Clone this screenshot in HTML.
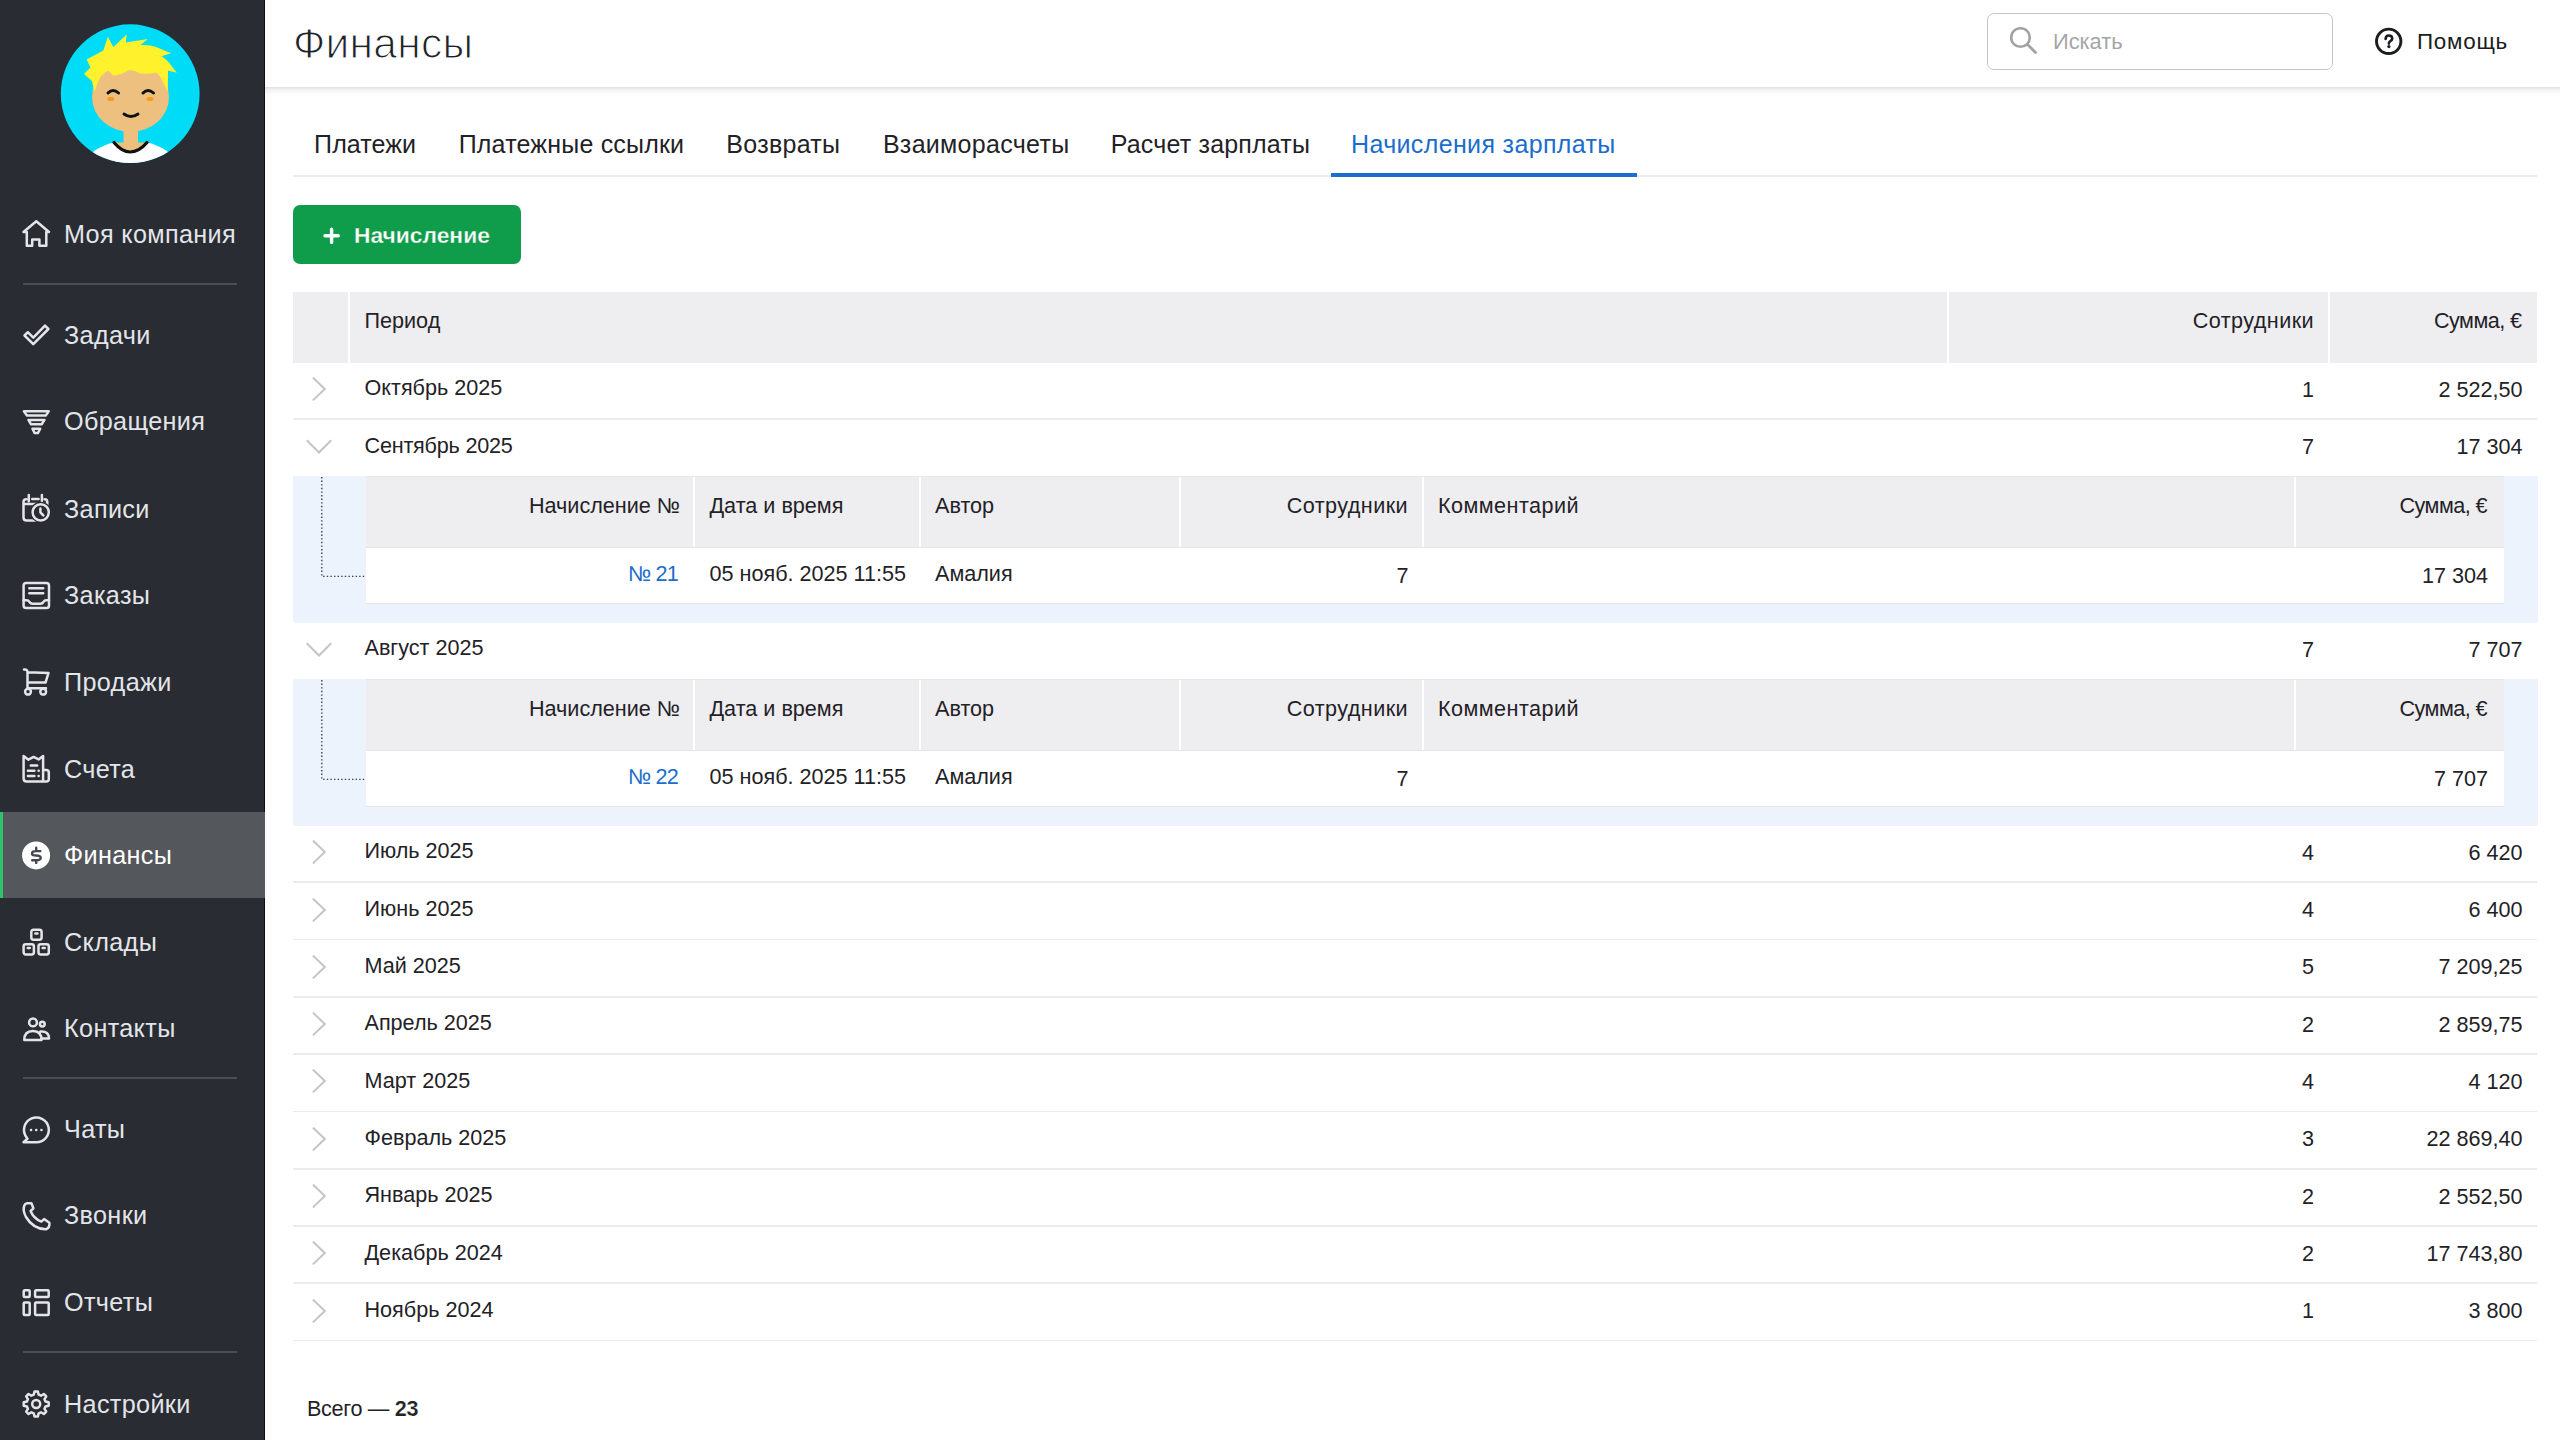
<!DOCTYPE html>
<html lang="ru"><head><meta charset="utf-8"><title>Финансы</title>
<style>
html,body{margin:0;padding:0;}
body{width:2560px;height:1440px;overflow:hidden;position:relative;background:#ffffff;font-family:"Liberation Sans", sans-serif;}
.t{position:absolute;line-height:1;white-space:nowrap;}
.r{position:absolute;display:block;}
</style></head><body>

<div class="r" style="left:0.00px;top:0.00px;width:265.00px;height:1440.00px;background:#292c33;"></div>
<div class="r" style="left:264.00px;top:0.00px;width:1.00px;height:1440.00px;background:#0d0f11;"></div>
<svg class="r" style="left:50.00px;top:15.00px;" width="160" height="160" viewBox="0 0 160 160">
<defs><clipPath id="avc"><circle cx="80.2" cy="78.7" r="69.4"/></clipPath></defs>
<circle cx="80.2" cy="78.7" r="69.4" fill="#00dbf8"/>
<g clip-path="url(#avc)">
<rect x="73.5" y="100" width="14.5" height="35" fill="#edc07f"/>
<path d="M30 160 L44 136 Q55 129 64 127.5 Q72 136 80 136.5 Q89 136 97 127.5 Q106 129 117 136 L132 160 Z" fill="#ffffff"/>
<path d="M64 127.5 Q72 137 80 137 Q89 137 97 127.5 Z" fill="#edc07f"/><path d="M64 127.5 Q72 137 80 137 Q89 137 97 127.5" fill="none" stroke="#111" stroke-width="3.2" stroke-linecap="round"/>
<ellipse cx="80.5" cy="82" rx="38.5" ry="35" fill="#edc07f"/>
<path d="M44.4 76.7 L42 66 L33.9 58.9 L40.5 52.5 L36.7 44.4 L47.8 38.5 L53.3 35.6 L57.8 21.7 L63.3 32 L76.7 19.4 L75.8 27.5 L97.8 23.9 L90.5 30 Q100 29.5 106.7 32.2 L121.1 38.3 L111.5 41.3 Q116 44 118.5 47 L126.7 57.8 L118 55.6 L117.8 76.7 L112.5 66 Q110 60 106 57.5 Q98 59.5 90 58.5 Q84 54.5 78 55.5 Q70 60.5 63 60.5 Q60 57 58 55.5 Q52 59 49 64.5 Z" fill="#fff22c"/>
<path d="M58 78 Q63 73 68.5 78 M93 78 Q98 73 103.5 78" fill="none" stroke="#111" stroke-width="3" stroke-linecap="round"/>
<ellipse cx="60.8" cy="84" rx="3.6" ry="2.1" fill="#f59a1c"/>
<ellipse cx="100" cy="84" rx="3.6" ry="2.1" fill="#f59a1c"/>
<path d="M74 99 Q81 104 88 99" fill="none" stroke="#111" stroke-width="3" stroke-linecap="round"/>
</g></svg>
<div class="r" style="left:0.00px;top:812.20px;width:265.00px;height:86.00px;background:#54575c;"></div>
<div class="r" style="left:0.00px;top:812.20px;width:3.00px;height:86.00px;background:#2fc36e;"></div>
<span class="t" style="left:64.00px;top:221.67px;font-size:25.2px;color:#e3e5e9;font-weight:400;letter-spacing:0.350px;">Моя компания</span>
<svg class="r" style="left:22.00px;top:220.00px;overflow:visible" width="29" height="29" viewBox="0 0 29 29"><path d="M4.8 12 H1.5 L14.3 1.3 L27 12 H24.3 V25.8 H17.4 V19.6 H10.2 V25.8 H4.8 Z" fill="none" stroke="#e3e5e9" stroke-width="2.5" stroke-linecap="round" stroke-linejoin="round"/></svg>
<span class="t" style="left:64.00px;top:323.47px;font-size:25.2px;color:#e3e5e9;font-weight:400;letter-spacing:0.350px;">Задачи</span>
<svg class="r" style="left:22.00px;top:320.00px;overflow:visible" width="29" height="29" viewBox="0 0 29 29"><path d="M2.5 15.5 L5.8 12.2 L11.3 17.6 L23 5.6 L26.4 9 L11.3 24.2 Z" fill="none" stroke="#e3e5e9" stroke-width="2.5" stroke-linecap="round" stroke-linejoin="round"/></svg>
<span class="t" style="left:64.00px;top:409.37px;font-size:25.2px;color:#e3e5e9;font-weight:400;letter-spacing:0.350px;">Обращения</span>
<svg class="r" style="left:22.00px;top:406.50px;overflow:visible" width="29" height="29" viewBox="0 0 29 29"><path d="M1.9 4.2 H26.7 L23.7 8.6 H5 Z M6.5 12.9 H22.5 L19.7 17.2 H8.9 Z M10.5 21.7 H18.2 L15.9 26.1 H12.7 Z" fill="none" stroke="#e3e5e9" stroke-width="2.5" stroke-linecap="round" stroke-linejoin="round"/></svg>
<span class="t" style="left:64.00px;top:496.67px;font-size:25.2px;color:#e3e5e9;font-weight:400;letter-spacing:0.350px;">Записи</span>
<svg class="r" style="left:22.00px;top:494.00px;overflow:visible" width="29" height="29" viewBox="0 0 29 29"><path d="M19 26.5 H4.5 Q1.5 26.5 1.5 23.5 V8 Q1.5 5.3 4.3 5.3 M22.6 5.3 Q25.3 5.3 25.3 8 V13 M1.5 10.1 H25.3 M6.8 0.9 V7.2 M19.9 0.9 V7.2 M10.2 5.1 H16.6" fill="none" stroke="#e3e5e9" stroke-width="2.5" stroke-linecap="round" stroke-linejoin="round"/><circle cx="18.7" cy="18.3" r="10.6" fill="#292c33"/><circle cx="18.7" cy="18.3" r="8.1" fill="none" stroke="#e3e5e9" stroke-width="2.5" stroke-linecap="round" stroke-linejoin="round"/><path d="M18.4 14.6 V18.3 L21.3 21.4" fill="none" stroke="#e3e5e9" stroke-width="2.5" stroke-linecap="round" stroke-linejoin="round"/></svg>
<span class="t" style="left:64.00px;top:582.87px;font-size:25.2px;color:#e3e5e9;font-weight:400;letter-spacing:0.350px;">Заказы</span>
<svg class="r" style="left:22.00px;top:580.50px;overflow:visible" width="29" height="29" viewBox="0 0 29 29"><rect x="1.6" y="1.9" width="25.4" height="25.1" rx="2.6" fill="none" stroke="#e3e5e9" stroke-width="2.5" stroke-linecap="round" stroke-linejoin="round"/><path d="M7.3 7.3 H21.2 M7.3 12.3 H21.2 M1.6 19.2 H4.7 Q6.5 19.2 7.5 21 Q8.5 22.7 10.3 22.7 H18.6 Q20.4 22.7 21.4 21 Q22.4 19.2 24.2 19.2 H27" fill="none" stroke="#e3e5e9" stroke-width="2.5" stroke-linecap="round" stroke-linejoin="round"/></svg>
<span class="t" style="left:64.00px;top:669.67px;font-size:25.2px;color:#e3e5e9;font-weight:400;letter-spacing:0.350px;">Продажи</span>
<svg class="r" style="left:22.00px;top:668.00px;overflow:visible" width="29" height="29" viewBox="0 0 29 29"><path d="M2 1.5 Q5.5 1 5.5 4.5 V20.2 H24 M5.5 4.2 L26.5 5 L23.5 14.6 H5.5" fill="none" stroke="#e3e5e9" stroke-width="2.5" stroke-linecap="round" stroke-linejoin="round"/><circle cx="6" cy="23.7" r="2.9" fill="none" stroke="#e3e5e9" stroke-width="2.5" stroke-linecap="round" stroke-linejoin="round"/><circle cx="21.2" cy="23.7" r="2.9" fill="none" stroke="#e3e5e9" stroke-width="2.5" stroke-linecap="round" stroke-linejoin="round"/></svg>
<span class="t" style="left:64.00px;top:757.07px;font-size:25.2px;color:#e3e5e9;font-weight:400;letter-spacing:0.350px;">Счета</span>
<svg class="r" style="left:22.00px;top:754.50px;overflow:visible" width="29" height="29" viewBox="0 0 29 29"><path d="M21.1 14.9 H24.3 Q26.8 14.9 26.8 17.4 V24.1 Q26.8 26.6 24.3 26.6 H4.6 Q1.6 26.6 1.6 23.6 V1.1 L6.4 4.7 L11.6 1.9 L16.6 4.4 L21.1 1.1 V26.6 M8.8 10.6 H15.2 M5.9 15.8 H12.4 M5.9 20.9 H12.4 M16.6 15.8 H16.7 M16.6 20.9 H16.7" fill="none" stroke="#e3e5e9" stroke-width="2.5" stroke-linecap="round" stroke-linejoin="round"/></svg>
<span class="t" style="left:64.00px;top:843.07px;font-size:25.2px;color:#ffffff;font-weight:400;letter-spacing:0.350px;">Финансы</span>
<svg class="r" style="left:22.00px;top:840.50px;overflow:visible" width="29" height="29" viewBox="0 0 29 29"><circle cx="14.1" cy="14.45" r="14" fill="#ffffff"/><path d="M18.4 10.1 H14.2 Q10 10.1 10 12.4 Q10 14.5 14 14.5 Q18.7 14.5 18.7 17 Q18.7 19.2 14.2 19.2 H10.2 M14.2 6.8 V10.1 M14.2 19.2 V21.9" fill="none" stroke="#44474c" stroke-width="2.4" stroke-linecap="round" stroke-linejoin="round"/></svg>
<span class="t" style="left:64.00px;top:930.27px;font-size:25.2px;color:#e3e5e9;font-weight:400;letter-spacing:0.350px;">Склады</span>
<svg class="r" style="left:22.00px;top:928.00px;overflow:visible" width="29" height="29" viewBox="0 0 29 29"><rect x="9.3" y="1.7" width="10.3" height="10" rx="2.2" fill="none" stroke="#e3e5e9" stroke-width="2.5" stroke-linecap="round" stroke-linejoin="round"/><rect x="1.6" y="16.2" width="10.3" height="10.3" rx="2.2" fill="none" stroke="#e3e5e9" stroke-width="2.5" stroke-linecap="round" stroke-linejoin="round"/><rect x="16.5" y="16.2" width="10.3" height="10.3" rx="2.2" fill="none" stroke="#e3e5e9" stroke-width="2.5" stroke-linecap="round" stroke-linejoin="round"/><path d="M13.4 5.6 H15.5 M5.7 20.1 H7.8 M20.6 20.1 H22.7" fill="none" stroke="#e3e5e9" stroke-width="2.5" stroke-linecap="round" stroke-linejoin="round"/></svg>
<span class="t" style="left:64.00px;top:1016.47px;font-size:25.2px;color:#e3e5e9;font-weight:400;letter-spacing:0.350px;">Контакты</span>
<svg class="r" style="left:22.00px;top:1016.50px;overflow:visible" width="29" height="29" viewBox="0 0 29 29"><circle cx="11" cy="5.4" r="3.9" fill="none" stroke="#e3e5e9" stroke-width="2.5" stroke-linecap="round" stroke-linejoin="round"/><circle cx="20.3" cy="7.1" r="2.4" fill="none" stroke="#e3e5e9" stroke-width="2.5" stroke-linecap="round" stroke-linejoin="round"/><path d="M2.3 23 Q2.3 14 10.9 14 Q19.5 14 19.5 23 Z M18.3 14.6 Q27 13.8 27 21.5 H20.5" fill="none" stroke="#e3e5e9" stroke-width="2.5" stroke-linecap="round" stroke-linejoin="round"/></svg>
<span class="t" style="left:64.00px;top:1116.67px;font-size:25.2px;color:#e3e5e9;font-weight:400;letter-spacing:0.350px;">Чаты</span>
<svg class="r" style="left:22.00px;top:1115.50px;overflow:visible" width="29" height="29" viewBox="0 0 29 29"><path d="M14.2 26.3 A12.4 12.4 0 1 0 4.7 21.6 L5.5 22.8 L1.5 26.3 Z" fill="none" stroke="#e3e5e9" stroke-width="2.5" stroke-linecap="round" stroke-linejoin="round"/><path d="M9 14 H9.1 M14.2 14 H14.3 M19.4 14 H19.5" fill="none" stroke="#e3e5e9" stroke-width="2.5" stroke-linecap="round" stroke-linejoin="round" stroke-width="2.7"/></svg>
<span class="t" style="left:64.00px;top:1203.37px;font-size:25.2px;color:#e3e5e9;font-weight:400;letter-spacing:0.350px;">Звонки</span>
<svg class="r" style="left:22.00px;top:1202.00px;overflow:visible" width="29" height="29" viewBox="0 0 29 29"><path d="M5 1.3 H9.4 L11.4 6.3 L8.6 9 Q11.5 16.5 19.3 19.6 L22.1 17.1 L27.4 20.8 Q28 25.5 24 27.3 Q11 27 4 15 Q0.5 8.5 2.2 3.8 Q3 1.5 5 1.3 Z" fill="none" stroke="#e3e5e9" stroke-width="2.5" stroke-linecap="round" stroke-linejoin="round"/></svg>
<span class="t" style="left:64.00px;top:1290.07px;font-size:25.2px;color:#e3e5e9;font-weight:400;letter-spacing:0.350px;">Отчеты</span>
<svg class="r" style="left:22.00px;top:1289.00px;overflow:visible" width="29" height="29" viewBox="0 0 29 29"><rect x="1.7" y="1.3" width="6" height="6.6" rx="1" fill="none" stroke="#e3e5e9" stroke-width="2.5" stroke-linecap="round" stroke-linejoin="round"/><rect x="13.1" y="1.3" width="13.6" height="6.6" rx="1" fill="none" stroke="#e3e5e9" stroke-width="2.5" stroke-linecap="round" stroke-linejoin="round"/><rect x="1.7" y="13.5" width="6" height="12.6" rx="1" fill="none" stroke="#e3e5e9" stroke-width="2.5" stroke-linecap="round" stroke-linejoin="round"/><rect x="13.1" y="13.5" width="13.6" height="12.6" rx="1" fill="none" stroke="#e3e5e9" stroke-width="2.5" stroke-linecap="round" stroke-linejoin="round"/></svg>
<span class="t" style="left:64.00px;top:1391.67px;font-size:25.2px;color:#e3e5e9;font-weight:400;letter-spacing:0.350px;">Настройки</span>
<svg class="r" style="left:22.00px;top:1390.00px;overflow:visible" width="29" height="29" viewBox="0 0 29 29"><path d="M12.52 1.51 L15.88 1.51 L16.66 4.72 L19.02 5.70 L21.84 3.98 L24.22 6.36 L22.50 9.18 L23.48 11.54 L26.69 12.32 L26.69 15.68 L23.48 16.46 L22.50 18.82 L24.22 21.64 L21.84 24.02 L19.02 22.30 L16.66 23.28 L15.88 26.49 L12.52 26.49 L11.74 23.28 L9.38 22.30 L6.56 24.02 L4.18 21.64 L5.90 18.82 L4.92 16.46 L1.71 15.68 L1.71 12.32 L4.92 11.54 L5.90 9.18 L4.18 6.36 L6.56 3.98 L9.38 5.70 L11.74 4.72 Z" fill="none" stroke="#e3e5e9" stroke-width="2.5" stroke-linecap="round" stroke-linejoin="round"/><circle cx="14.2" cy="14" r="4" fill="none" stroke="#e3e5e9" stroke-width="2.5" stroke-linecap="round" stroke-linejoin="round"/></svg>
<div class="r" style="left:23.00px;top:283.00px;width:214.00px;height:2.00px;background:#4b4f55;"></div>
<div class="r" style="left:23.00px;top:1076.80px;width:214.00px;height:2.00px;background:#4b4f55;"></div>
<div class="r" style="left:23.00px;top:1351.30px;width:214.00px;height:2.00px;background:#4b4f55;"></div>
<div class="r" style="left:265.00px;top:0.00px;width:2295.00px;height:87.00px;background:#ffffff;"></div>
<div class="r" style="left:265px;top:0;width:8px;height:1440px;background:linear-gradient(to right,rgba(0,0,0,0.02),rgba(0,0,0,0));z-index:5"></div>
<div class="r" style="left:265px;top:87px;width:2295px;height:10px;background:linear-gradient(#e3e3e7,#f3f3f5 30%,#fbfbfc 60%,rgba(255,255,255,0));"></div>
<span class="t" style="left:293.00px;top:22.62px;font-size:42.5px;color:#1e2226;font-weight:400;letter-spacing:0.250px;-webkit-text-stroke:1.15px #ffffff;">Финансы</span>
<div class="r" style="left:1987px;top:12.5px;width:345.5px;height:57.5px;box-sizing:border-box;border:1.6px solid #c6c6c8;border-radius:7px;background:#fff;"></div>
<svg class="r" style="left:2006.00px;top:24.00px;" width="34" height="34" viewBox="0 0 34 34"><circle cx="14.5" cy="13.5" r="9.3" fill="none" stroke="#a2a2a4" stroke-width="2.6"/><path d="M21.3 20.3 L29.5 28.5" stroke="#a2a2a4" stroke-width="2.8" stroke-linecap="round"/></svg>
<span class="t" style="left:2053.00px;top:31.05px;font-size:21.8px;color:#a5a5a7;font-weight:400;">Искать</span>
<svg class="r" style="left:2373.00px;top:26.00px;" width="32" height="32" viewBox="0 0 32 32"><circle cx="15.7" cy="15.3" r="12.2" fill="none" stroke="#1b1d20" stroke-width="2.9"/><path d="M12.6 12.9 Q12.6 9.5 15.9 9.5 Q19.2 9.5 19.2 12.5 Q19.2 14.2 17.3 15.2 Q15.9 16 15.9 17.6" fill="none" stroke="#1b1d20" stroke-width="2.6" stroke-linecap="round"/><circle cx="15.9" cy="20.6" r="1.6" fill="#1b1d20"/></svg>
<span class="t" style="left:2417.00px;top:31.44px;font-size:22.4px;color:#1b1d20;font-weight:400;letter-spacing:0.750px;">Помощь</span>
<div class="r" style="left:293.00px;top:174.50px;width:2244.00px;height:2.00px;background:#ececf0;"></div>
<span class="t" style="left:314.10px;top:132.24px;font-size:25.0px;color:#1f2226;font-weight:400;letter-spacing:0.100px;">Платежи</span>
<span class="t" style="left:458.70px;top:132.24px;font-size:25.0px;color:#1f2226;font-weight:400;letter-spacing:0.190px;">Платежные ссылки</span>
<span class="t" style="left:726.30px;top:132.24px;font-size:25.0px;color:#1f2226;font-weight:400;letter-spacing:0.290px;">Возвраты</span>
<span class="t" style="left:882.90px;top:132.24px;font-size:25.0px;color:#1f2226;font-weight:400;letter-spacing:0.300px;">Взаиморасчеты</span>
<span class="t" style="left:1110.70px;top:132.24px;font-size:25.0px;color:#1f2226;font-weight:400;letter-spacing:0.190px;">Расчет зарплаты</span>
<span class="t" style="left:1351.00px;top:132.24px;font-size:25.0px;color:#1a6dcc;font-weight:400;letter-spacing:0.360px;">Начисления зарплаты</span>
<div class="r" style="left:1330.70px;top:173.00px;width:306.30px;height:4.00px;background:#1a6dcc;"></div>
<div class="r" style="left:293px;top:204.7px;width:228px;height:59px;border-radius:7px;background:#0f9d4b;"></div>
<svg class="r" style="left:321.50px;top:225.50px;" width="20" height="20" viewBox="0 0 20 20"><path d="M9.6 3.2 V16.4 M3 9.8 H16.2" stroke="#fff" stroke-width="3.4" stroke-linecap="round"/></svg>
<span class="t" style="left:354.00px;top:224.10px;font-size:22.8px;color:#ffffff;font-weight:700;-webkit-text-stroke:0.3px #0f9d4b;">Начисление</span>
<div class="r" style="left:293.00px;top:291.70px;width:2244.00px;height:70.90px;background:#eeedf0;"></div>
<div class="r" style="left:348.00px;top:291.70px;width:2.00px;height:70.90px;background:#ffffff;"></div>
<div class="r" style="left:1946.50px;top:291.70px;width:2.00px;height:70.90px;background:#ffffff;"></div>
<div class="r" style="left:2328.00px;top:291.70px;width:2.00px;height:70.90px;background:#ffffff;"></div>
<span class="t" style="left:364.50px;top:310.32px;font-size:21.6px;color:#1f2226;font-weight:400;">Период</span>
<span class="t" style="right:246.00px;top:310.32px;font-size:21.6px;color:#1f2226;font-weight:400;letter-spacing:0.420px;">Сотрудники</span>
<span class="t" style="right:38.50px;top:310.32px;font-size:21.6px;color:#1f2226;font-weight:400;letter-spacing:-0.550px;">Сумма, €</span>
<svg class="r" style="left:306.00px;top:374.10px;" width="26" height="30" viewBox="0 0 26 30"><path d="M7.6 4.3 L18.8 15 L7.6 25.7" fill="none" stroke="#c4c4c6" stroke-width="2.0" stroke-linecap="square"/></svg>
<span class="t" style="left:364.50px;top:377.32px;font-size:21.6px;color:#1f2226;font-weight:400;">Октябрь 2025</span>
<span class="t" style="right:246.00px;top:378.62px;font-size:21.6px;color:#1f2226;font-weight:400;">1</span>
<span class="t" style="right:37.50px;top:378.62px;font-size:21.6px;color:#1f2226;font-weight:400;">2 522,50</span>
<div class="r" style="left:293.00px;top:418.20px;width:2244.00px;height:1.80px;background:#ebebee;"></div>
<svg class="r" style="left:304.00px;top:434.30px;" width="30" height="26" viewBox="0 0 30 26"><path d="M3.5 7 L15 18.5 L26.5 7" fill="none" stroke="#c4c4c6" stroke-width="2.0" stroke-linecap="square"/></svg>
<span class="t" style="left:364.50px;top:434.52px;font-size:21.6px;color:#1f2226;font-weight:400;letter-spacing:-0.200px;">Сентябрь 2025</span>
<span class="t" style="right:246.00px;top:435.82px;font-size:21.6px;color:#1f2226;font-weight:400;">7</span>
<span class="t" style="right:37.50px;top:435.82px;font-size:21.6px;color:#1f2226;font-weight:400;">17 304</span>
<div class="r" style="left:293.00px;top:475.60px;width:2245.00px;height:147.10px;background:#ecf3fc;border-radius:0 0 3px 3px;"></div>
<div class="r" style="left:366.00px;top:475.60px;width:2137.50px;height:72.40px;background:#eeedf0;"></div>
<div class="r" style="left:693.20px;top:475.60px;width:2.00px;height:72.40px;background:#ffffff;"></div>
<div class="r" style="left:918.60px;top:475.60px;width:2.00px;height:72.40px;background:#ffffff;"></div>
<div class="r" style="left:1179.20px;top:475.60px;width:2.00px;height:72.40px;background:#ffffff;"></div>
<div class="r" style="left:1422.20px;top:475.60px;width:2.00px;height:72.40px;background:#ffffff;"></div>
<div class="r" style="left:2293.50px;top:475.60px;width:2.00px;height:72.40px;background:#ffffff;"></div>
<div class="r" style="left:366.00px;top:548.00px;width:2137.50px;height:56.00px;background:#ffffff;"></div>
<div class="r" style="left:366.00px;top:475.60px;width:2137.50px;height:1.20px;background:#e7e7eb;"></div>
<div class="r" style="left:366.00px;top:547.20px;width:2137.50px;height:1.00px;background:#e4e4e8;"></div>
<div class="r" style="left:366.00px;top:603.20px;width:2137.50px;height:1.00px;background:#e3e4e8;"></div>
<span class="t" style="right:1880.00px;top:495.02px;font-size:21.6px;color:#1f2226;font-weight:400;">Начисление №</span>
<span class="t" style="left:709.50px;top:495.02px;font-size:21.6px;color:#1f2226;font-weight:400;">Дата и время</span>
<span class="t" style="left:935.00px;top:495.02px;font-size:21.6px;color:#1f2226;font-weight:400;">Автор</span>
<span class="t" style="right:1152.00px;top:495.02px;font-size:21.6px;color:#1f2226;font-weight:400;letter-spacing:0.420px;">Сотрудники</span>
<span class="t" style="left:1438.00px;top:495.02px;font-size:21.6px;color:#1f2226;font-weight:400;letter-spacing:0.450px;">Комментарий</span>
<span class="t" style="right:73.00px;top:495.02px;font-size:21.6px;color:#1f2226;font-weight:400;letter-spacing:-0.550px;">Сумма, €</span>
<span class="t" style="right:1882.00px;top:562.52px;font-size:21.6px;color:#1a6dcc;font-weight:400;letter-spacing:-0.800px;">№ 21</span>
<span class="t" style="left:709.50px;top:562.52px;font-size:21.6px;color:#1f2226;font-weight:400;">05 нояб. 2025 11:55</span>
<span class="t" style="left:935.00px;top:562.52px;font-size:21.6px;color:#1f2226;font-weight:400;">Амалия</span>
<span class="t" style="right:1151.50px;top:564.52px;font-size:21.6px;color:#1f2226;font-weight:400;">7</span>
<span class="t" style="right:72.00px;top:564.52px;font-size:21.6px;color:#1f2226;font-weight:400;">17 304</span>
<svg class="r" style="left:318.00px;top:475.60px;" width="50" height="104" viewBox="0 0 50 104"><path d="M3.8 1 V100.4 H48" fill="none" stroke="#3c3f44" stroke-width="1.4" stroke-dasharray="1.4 2.2"/></svg>
<svg class="r" style="left:304.00px;top:637.20px;" width="30" height="26" viewBox="0 0 30 26"><path d="M3.5 7 L15 18.5 L26.5 7" fill="none" stroke="#c4c4c6" stroke-width="2.0" stroke-linecap="square"/></svg>
<span class="t" style="left:364.50px;top:637.42px;font-size:21.6px;color:#1f2226;font-weight:400;">Август 2025</span>
<span class="t" style="right:246.00px;top:638.72px;font-size:21.6px;color:#1f2226;font-weight:400;">7</span>
<span class="t" style="right:37.50px;top:638.72px;font-size:21.6px;color:#1f2226;font-weight:400;">7 707</span>
<div class="r" style="left:293.00px;top:678.60px;width:2245.00px;height:147.10px;background:#ecf3fc;border-radius:0 0 3px 3px;"></div>
<div class="r" style="left:366.00px;top:678.60px;width:2137.50px;height:72.40px;background:#eeedf0;"></div>
<div class="r" style="left:693.20px;top:678.60px;width:2.00px;height:72.40px;background:#ffffff;"></div>
<div class="r" style="left:918.60px;top:678.60px;width:2.00px;height:72.40px;background:#ffffff;"></div>
<div class="r" style="left:1179.20px;top:678.60px;width:2.00px;height:72.40px;background:#ffffff;"></div>
<div class="r" style="left:1422.20px;top:678.60px;width:2.00px;height:72.40px;background:#ffffff;"></div>
<div class="r" style="left:2293.50px;top:678.60px;width:2.00px;height:72.40px;background:#ffffff;"></div>
<div class="r" style="left:366.00px;top:751.00px;width:2137.50px;height:56.00px;background:#ffffff;"></div>
<div class="r" style="left:366.00px;top:678.60px;width:2137.50px;height:1.20px;background:#e7e7eb;"></div>
<div class="r" style="left:366.00px;top:750.20px;width:2137.50px;height:1.00px;background:#e4e4e8;"></div>
<div class="r" style="left:366.00px;top:806.20px;width:2137.50px;height:1.00px;background:#e3e4e8;"></div>
<span class="t" style="right:1880.00px;top:698.02px;font-size:21.6px;color:#1f2226;font-weight:400;">Начисление №</span>
<span class="t" style="left:709.50px;top:698.02px;font-size:21.6px;color:#1f2226;font-weight:400;">Дата и время</span>
<span class="t" style="left:935.00px;top:698.02px;font-size:21.6px;color:#1f2226;font-weight:400;">Автор</span>
<span class="t" style="right:1152.00px;top:698.02px;font-size:21.6px;color:#1f2226;font-weight:400;letter-spacing:0.420px;">Сотрудники</span>
<span class="t" style="left:1438.00px;top:698.02px;font-size:21.6px;color:#1f2226;font-weight:400;letter-spacing:0.450px;">Комментарий</span>
<span class="t" style="right:73.00px;top:698.02px;font-size:21.6px;color:#1f2226;font-weight:400;letter-spacing:-0.550px;">Сумма, €</span>
<span class="t" style="right:1882.00px;top:765.52px;font-size:21.6px;color:#1a6dcc;font-weight:400;letter-spacing:-0.800px;">№ 22</span>
<span class="t" style="left:709.50px;top:765.52px;font-size:21.6px;color:#1f2226;font-weight:400;">05 нояб. 2025 11:55</span>
<span class="t" style="left:935.00px;top:765.52px;font-size:21.6px;color:#1f2226;font-weight:400;">Амалия</span>
<span class="t" style="right:1151.50px;top:767.52px;font-size:21.6px;color:#1f2226;font-weight:400;">7</span>
<span class="t" style="right:72.00px;top:767.52px;font-size:21.6px;color:#1f2226;font-weight:400;">7 707</span>
<svg class="r" style="left:318.00px;top:678.60px;" width="50" height="104" viewBox="0 0 50 104"><path d="M3.8 1 V100.4 H48" fill="none" stroke="#3c3f44" stroke-width="1.4" stroke-dasharray="1.4 2.2"/></svg>
<svg class="r" style="left:306.00px;top:837.20px;" width="26" height="30" viewBox="0 0 26 30"><path d="M7.6 4.3 L18.8 15 L7.6 25.7" fill="none" stroke="#c4c4c6" stroke-width="2.0" stroke-linecap="square"/></svg>
<span class="t" style="left:364.50px;top:840.42px;font-size:21.6px;color:#1f2226;font-weight:400;">Июль 2025</span>
<span class="t" style="right:246.00px;top:841.72px;font-size:21.6px;color:#1f2226;font-weight:400;">4</span>
<span class="t" style="right:37.50px;top:841.72px;font-size:21.6px;color:#1f2226;font-weight:400;">6 420</span>
<div class="r" style="left:293.00px;top:881.30px;width:2244.00px;height:1.80px;background:#ebebee;"></div>
<svg class="r" style="left:306.00px;top:894.50px;" width="26" height="30" viewBox="0 0 26 30"><path d="M7.6 4.3 L18.8 15 L7.6 25.7" fill="none" stroke="#c4c4c6" stroke-width="2.0" stroke-linecap="square"/></svg>
<span class="t" style="left:364.50px;top:897.72px;font-size:21.6px;color:#1f2226;font-weight:400;">Июнь 2025</span>
<span class="t" style="right:246.00px;top:899.02px;font-size:21.6px;color:#1f2226;font-weight:400;">4</span>
<span class="t" style="right:37.50px;top:899.02px;font-size:21.6px;color:#1f2226;font-weight:400;">6 400</span>
<div class="r" style="left:293.00px;top:938.60px;width:2244.00px;height:1.80px;background:#ebebee;"></div>
<svg class="r" style="left:306.00px;top:951.80px;" width="26" height="30" viewBox="0 0 26 30"><path d="M7.6 4.3 L18.8 15 L7.6 25.7" fill="none" stroke="#c4c4c6" stroke-width="2.0" stroke-linecap="square"/></svg>
<span class="t" style="left:364.50px;top:955.02px;font-size:21.6px;color:#1f2226;font-weight:400;">Май 2025</span>
<span class="t" style="right:246.00px;top:956.32px;font-size:21.6px;color:#1f2226;font-weight:400;">5</span>
<span class="t" style="right:37.50px;top:956.32px;font-size:21.6px;color:#1f2226;font-weight:400;">7 209,25</span>
<div class="r" style="left:293.00px;top:995.90px;width:2244.00px;height:1.80px;background:#ebebee;"></div>
<svg class="r" style="left:306.00px;top:1009.10px;" width="26" height="30" viewBox="0 0 26 30"><path d="M7.6 4.3 L18.8 15 L7.6 25.7" fill="none" stroke="#c4c4c6" stroke-width="2.0" stroke-linecap="square"/></svg>
<span class="t" style="left:364.50px;top:1012.32px;font-size:21.6px;color:#1f2226;font-weight:400;">Апрель 2025</span>
<span class="t" style="right:246.00px;top:1013.62px;font-size:21.6px;color:#1f2226;font-weight:400;">2</span>
<span class="t" style="right:37.50px;top:1013.62px;font-size:21.6px;color:#1f2226;font-weight:400;">2 859,75</span>
<div class="r" style="left:293.00px;top:1053.20px;width:2244.00px;height:1.80px;background:#ebebee;"></div>
<svg class="r" style="left:306.00px;top:1066.40px;" width="26" height="30" viewBox="0 0 26 30"><path d="M7.6 4.3 L18.8 15 L7.6 25.7" fill="none" stroke="#c4c4c6" stroke-width="2.0" stroke-linecap="square"/></svg>
<span class="t" style="left:364.50px;top:1069.62px;font-size:21.6px;color:#1f2226;font-weight:400;">Март 2025</span>
<span class="t" style="right:246.00px;top:1070.92px;font-size:21.6px;color:#1f2226;font-weight:400;">4</span>
<span class="t" style="right:37.50px;top:1070.92px;font-size:21.6px;color:#1f2226;font-weight:400;">4 120</span>
<div class="r" style="left:293.00px;top:1110.50px;width:2244.00px;height:1.80px;background:#ebebee;"></div>
<svg class="r" style="left:306.00px;top:1123.70px;" width="26" height="30" viewBox="0 0 26 30"><path d="M7.6 4.3 L18.8 15 L7.6 25.7" fill="none" stroke="#c4c4c6" stroke-width="2.0" stroke-linecap="square"/></svg>
<span class="t" style="left:364.50px;top:1126.92px;font-size:21.6px;color:#1f2226;font-weight:400;">Февраль 2025</span>
<span class="t" style="right:246.00px;top:1128.22px;font-size:21.6px;color:#1f2226;font-weight:400;">3</span>
<span class="t" style="right:37.50px;top:1128.22px;font-size:21.6px;color:#1f2226;font-weight:400;">22 869,40</span>
<div class="r" style="left:293.00px;top:1167.80px;width:2244.00px;height:1.80px;background:#ebebee;"></div>
<svg class="r" style="left:306.00px;top:1181.00px;" width="26" height="30" viewBox="0 0 26 30"><path d="M7.6 4.3 L18.8 15 L7.6 25.7" fill="none" stroke="#c4c4c6" stroke-width="2.0" stroke-linecap="square"/></svg>
<span class="t" style="left:364.50px;top:1184.22px;font-size:21.6px;color:#1f2226;font-weight:400;">Январь 2025</span>
<span class="t" style="right:246.00px;top:1185.52px;font-size:21.6px;color:#1f2226;font-weight:400;">2</span>
<span class="t" style="right:37.50px;top:1185.52px;font-size:21.6px;color:#1f2226;font-weight:400;">2 552,50</span>
<div class="r" style="left:293.00px;top:1225.10px;width:2244.00px;height:1.80px;background:#ebebee;"></div>
<svg class="r" style="left:306.00px;top:1238.30px;" width="26" height="30" viewBox="0 0 26 30"><path d="M7.6 4.3 L18.8 15 L7.6 25.7" fill="none" stroke="#c4c4c6" stroke-width="2.0" stroke-linecap="square"/></svg>
<span class="t" style="left:364.50px;top:1241.52px;font-size:21.6px;color:#1f2226;font-weight:400;">Декабрь 2024</span>
<span class="t" style="right:246.00px;top:1242.82px;font-size:21.6px;color:#1f2226;font-weight:400;">2</span>
<span class="t" style="right:37.50px;top:1242.82px;font-size:21.6px;color:#1f2226;font-weight:400;">17 743,80</span>
<div class="r" style="left:293.00px;top:1282.40px;width:2244.00px;height:1.80px;background:#ebebee;"></div>
<svg class="r" style="left:306.00px;top:1295.60px;" width="26" height="30" viewBox="0 0 26 30"><path d="M7.6 4.3 L18.8 15 L7.6 25.7" fill="none" stroke="#c4c4c6" stroke-width="2.0" stroke-linecap="square"/></svg>
<span class="t" style="left:364.50px;top:1298.82px;font-size:21.6px;color:#1f2226;font-weight:400;">Ноябрь 2024</span>
<span class="t" style="right:246.00px;top:1300.12px;font-size:21.6px;color:#1f2226;font-weight:400;">1</span>
<span class="t" style="right:37.50px;top:1300.12px;font-size:21.6px;color:#1f2226;font-weight:400;">3 800</span>
<div class="r" style="left:293.00px;top:1339.70px;width:2244.00px;height:1.80px;background:#ebebee;"></div>
<span class="t" style="left:307.00px;top:1398.42px;font-size:21.6px;color:#1f2226;font-weight:400;letter-spacing:-0.300px;">Всего — <b style="font-weight:700;-webkit-text-stroke:0.2px #fff">23</b></span>
</body></html>
